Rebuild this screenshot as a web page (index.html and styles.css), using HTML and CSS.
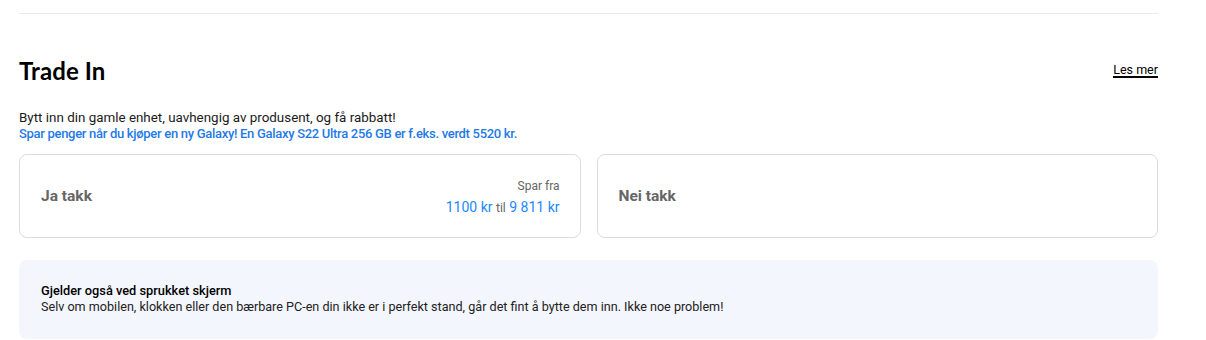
FILE: index.html
```html
<!DOCTYPE html>
<html lang="no">
<head>
  <meta charset="UTF-8" />
  <meta name="viewport" content="width=device-width, initial-scale=1.0"/>
  <title>Trade In</title>
  <link rel="stylesheet" href="styles.css">
</head>
<body>
  <div class="trade-in">
    <div class="divider"></div>
    <div class="header">
      <h2>Trade In</h2>
      <a href="#" class="more">Les mer</a>
    </div>
    <p class="intro">Bytt inn din gamle enhet, uavhengig av produsent, og få rabbatt!</p>
    <p class="promo">Spar penger når du kjøper en ny Galaxy! En Galaxy S22 Ultra 256 GB er f.eks. verdt 5520 kr.</p>
    <div class="options">
      <div class="option">
        <span class="option-label">Ja takk</span>
        <div class="savings">
          <span class="savings-from">Spar fra</span>
          <span class="savings-range">1100 kr <small>til</small> 9 811 kr</span>
        </div>
      </div>
      <div class="option">
        <span class="option-label">Nei takk</span>
      </div>
    </div>
    <div class="notice">
      <strong>Gjelder også ved sprukket skjerm</strong>
      <p>Selv om mobilen, klokken eller den bærbare PC-en din ikke er i perfekt stand, går det fint å bytte dem inn. Ikke noe problem!</p>
    </div>
  </div>
</body>
</html>
```

FILE: styles.css
```css
body {
  margin: 0;
  background-color: #fff;
  color: #000;
  font-family: 'Roboto', sans-serif;
}
.trade-in {
  width: 1139px;
  margin-left: 19px;
  padding-top: 13px;
}
.divider {
  height: 1px;
  background-color: #ebebeb;
}
.header {
  display: flex;
  justify-content: space-between;
  align-items: center;
  margin-top: 43px;
  height: 26px;
}
.header h2 {
  margin: 0;
  font-family: 'Lato', sans-serif;
  font-size: 24px;
  font-weight: 700;
  letter-spacing: 0.1px;
}
.header .more {
  color: #000;
  font-size: 12.5px;
  text-decoration: none;
  border-bottom: 2px solid #000;
  line-height: 13px;
}
.intro,
.promo {
  margin: 0;
  line-height: 16px;
}
.intro {
  margin-top: 27px;
  font-size: 13.4px;
  color: #1a1a1a;
}
.promo {
  font-size: 13px;
  color: #1f7ae8;
  font-weight: 500;
  letter-spacing: -0.3px;
}
.options {
  display: flex;
  gap: 16px;
  margin-top: 12px;
}
.option {
  flex: 1;
  height: 82px;
  border: 1px solid #dcdcdc;
  border-radius: 8px;
  display: flex;
  justify-content: space-between;
  align-items: center;
  padding: 0 20px 0 21px;
}
.option-label {
  font-size: 15.5px;
  font-weight: 700;
  color: #666;
}
.savings {
  display: flex;
  flex-direction: column;
  align-items: flex-end;
  gap: 6px;
  margin-top: 2px;
}
.savings-from {
  font-size: 12px;
  color: #666;
}
.savings-range {
  font-size: 14px;
  color: #2189ff;
}
.savings-range small {
  font-size: 12px;
  color: #666;
}
.notice {
  margin-top: 22px;
  background-color: #f4f6fd;
  border-radius: 8px;
  padding: 23px 22px 24px;
  font-size: 12.6px;
  line-height: 16px;
  color: #222;
}
.notice strong {
  display: block;
  font-size: 12.8px;
  font-weight: 500;
  color: #000;
}
.notice p {
  margin: 0;
}
```
